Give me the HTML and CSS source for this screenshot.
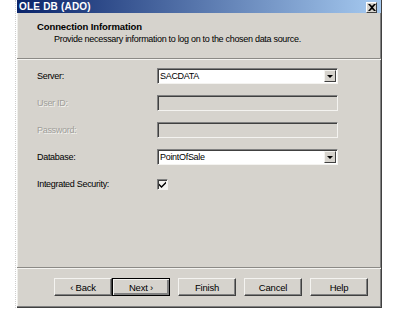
FILE: index.html
```html
<!DOCTYPE html>
<html lang="en">
<head>
  <meta charset="UTF-8">
  <title>OLE DB (ADO)</title>
  <link rel="stylesheet" href="styles.css">
</head>
<body>
  <div class="desk">
    <div class="dialog">
      <div class="titlebar">
        <span class="title">OLE DB (ADO)</span>
        <span class="close">
          <svg width="8" height="7" viewBox="0 0 8 7"><path d="M0 0h2l2 2 2-2h2L5 3.5 8 7H6L4 5 2 7H0l3-3.5z" fill="#000"/></svg>
        </span>
      </div>

      <div class="header">
        <h1>Connection Information</h1>
        <p>Provide necessary information to log on to the chosen data source.</p>
      </div>

      <div class="body">
        <div class="row">
          <label>Server:</label>
          <div class="field combo">
            <span class="value">SACDATA</span>
            <span class="drop"><i></i></span>
          </div>
        </div>
        <div class="row">
          <label class="disabled">User ID:</label>
          <div class="field off"></div>
        </div>
        <div class="row">
          <label class="disabled">Password:</label>
          <div class="field off"></div>
        </div>
        <div class="row">
          <label>Database:</label>
          <div class="field combo">
            <span class="value">PointOfSale</span>
            <span class="drop"><i></i></span>
          </div>
        </div>
        <div class="row">
          <label>Integrated Security:</label>
          <span class="check">
            <svg width="7" height="7" viewBox="0 0 7 7"><path d="M0 2.5l2.5 2.5L7 0.5v2L2.5 7 0 4.5z" fill="#000"/></svg>
          </span>
        </div>
      </div>

      <div class="footer">
        <div class="pair">
          <button>&lsaquo; Back</button>
          <button class="default">Next &rsaquo;</button>
        </div>
        <button>Finish</button>
        <button>Cancel</button>
        <button>Help</button>
      </div>
    </div>
  </div>
</body>
</html>
```

FILE: styles.css
```css
* {
  box-sizing: border-box;
  margin: 0;
  padding: 0;
}
body {
  background: #fff;
  font-family: "Liberation Sans", Arial, sans-serif;
  font-size: 9px;
  letter-spacing: -0.3px;
  color: #000;
}
.desk {
  margin-left: 15px;
  width: 371px;
  border-left: 1px dotted #d0d0d0;
}
.dialog {
  margin-left: 1px;
  width: 365px;
  height: 308px;
  background: #d6d3cd;
  border-right: 1px solid #404040;
  border-bottom: 1px solid #404040;
  box-shadow: inset -1px -1px 0 #808080, inset 1px 0 0 #eeeeea;
  display: flex;
  flex-direction: column;
}

/* Title bar */
.titlebar {
  height: 13px;
  background: linear-gradient(to right, #0a246a, #a6caf0);
  display: flex;
  align-items: center;
  justify-content: space-between;
  padding: 0 4px 0 2px;
}
.title {
  color: #fff;
  font-weight: bold;
  font-size: 10px;
  letter-spacing: 0.2px;
  line-height: 13px;
}
.close {
  width: 11px;
  height: 11px;
  background: #d6d3cd;
  border: 1px solid;
  border-color: #fff #404040 #404040 #fff;
  display: flex;
  align-items: center;
  justify-content: center;
  margin-top: 1px;
}

/* Header */
.header {
  height: 46px;
  padding: 8px 0 0 20px;
  border-bottom: 1px solid #8c8a86;
  box-shadow: 0 1px 0 #f4f3f0;
}
.header h1 {
  font-size: 9.5px;
  font-weight: bold;
  letter-spacing: -0.1px;
  line-height: 12px;
}
.header p {
  padding-left: 17px;
  line-height: 13px;
}

/* Fields */
.body {
  flex: 1;
  padding: 9px 0 0 20px;
  display: flex;
  flex-direction: column;
  gap: 11px;
}
.row {
  display: flex;
  align-items: center;
  height: 16px;
}
.row label {
  width: 120px;
}
.row label.disabled {
  color: #a09e9a;
  text-shadow: 1px 1px 0 #f4f3f0;
}
.field {
  width: 181px;
  height: 16px;
  border: 1px solid;
  border-color: #808080 #f4f3f0 #f4f3f0 #808080;
  box-shadow: inset 1px 1px 0 #404040;
  background: #fff;
  display: flex;
  align-items: center;
}
.field.off {
  background: #d6d3cd;
}
.combo .value {
  flex: 1;
  padding-left: 2px;
}
.drop {
  width: 12px;
  height: 12px;
  margin-right: 1px;
  background: #d6d3cd;
  border: 1px solid;
  border-color: #f4f3f0 #404040 #404040 #f4f3f0;
  display: flex;
  align-items: center;
  justify-content: center;
}
.drop i {
  width: 0;
  height: 0;
  border-left: 3px solid transparent;
  border-right: 3px solid transparent;
  border-top: 3px solid #000;
}
.check {
  width: 11px;
  height: 11px;
  background: #f4f3f0;
  border: 1px solid;
  border-color: #808080 #f4f3f0 #f4f3f0 #808080;
  box-shadow: inset 1px 1px 0 #404040;
  display: flex;
  align-items: center;
  justify-content: center;
}

/* Buttons */
.footer {
  height: 40px;
  border-top: 1px solid #8c8a86;
  box-shadow: inset 0 1px 0 #f4f3f0;
  padding: 10px 0 0 37px;
  display: flex;
  gap: 8px;
}
.pair {
  display: flex;
}
button {
  width: 58px;
  height: 18px;
  font-family: inherit;
  font-size: 9.5px;
  letter-spacing: -0.2px;
  color: #000;
  background: #d6d3cd;
  border: 1px solid;
  border-color: #f4f3f0 #404040 #404040 #f4f3f0;
  box-shadow: inset -1px -1px 0 #808080;
}
button.default {
  border: 1px solid #000;
  box-shadow: inset 1px 1px 0 #f4f3f0, inset -2px -2px 0 #808080;
}
```
